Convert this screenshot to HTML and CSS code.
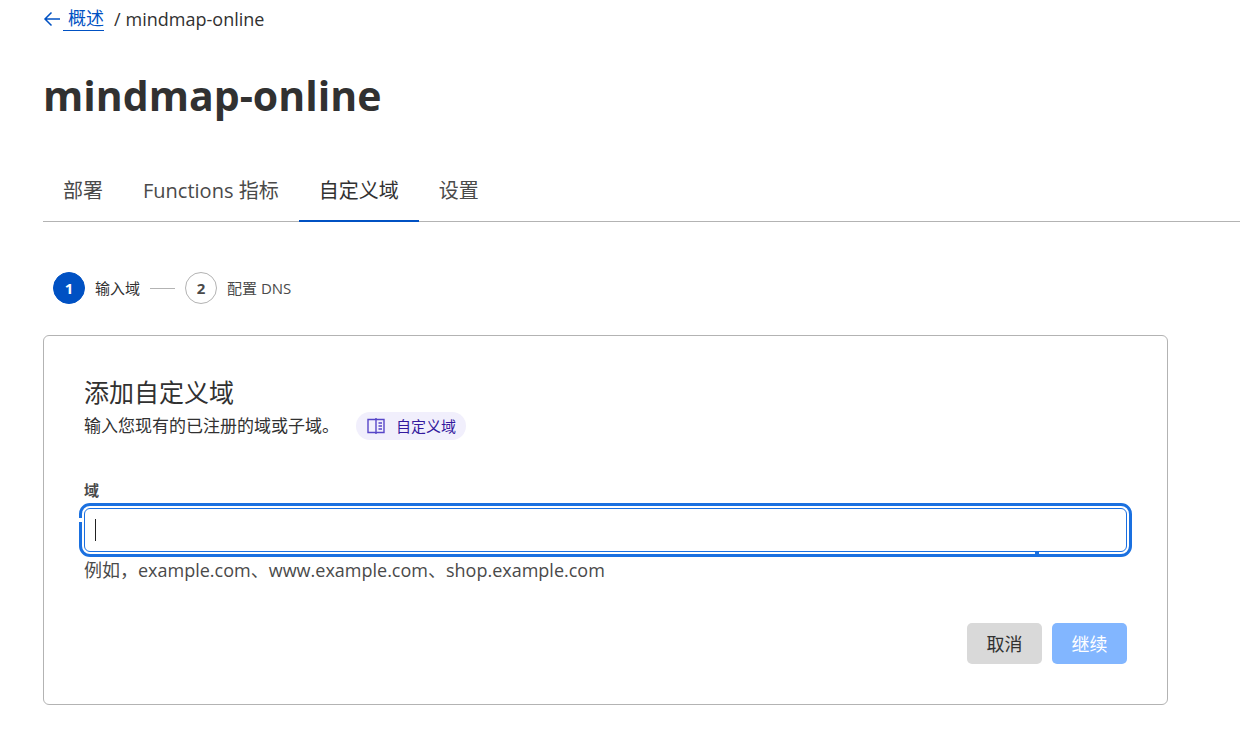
FILE: index.html
```html
<!DOCTYPE html>
<html lang="zh-CN">
<head>
<meta charset="utf-8">
<meta name="viewport" content="width=device-width, initial-scale=1">
<title>mindmap-online</title>
<link rel="stylesheet" href="styles.css">
</head>
<body>
<div class="page">
  <nav class="breadcrumb" aria-label="breadcrumb">
    <svg class="back-icon" viewBox="0 0 18 18" aria-hidden="true"><path d="M17 9H2M8.500 2.500L2 9l6.500 6.500"/></svg>
    <a class="back-link" href="#">概述</a>
    <span class="separator">/</span>
    <span>mindmap-online</span>
  </nav>
  <h1 class="title">mindmap-online</h1>
  <nav class="tabs">
    <a class="tab" href="#">部署</a>
    <a class="tab" href="#">Functions 指标</a>
    <a class="tab tab-active" href="#" aria-current="page">自定义域</a>
    <a class="tab" href="#">设置</a>
  </nav>
  <main class="content">
    <ol class="steps">
      <li class="step step-current"><span class="step-number">1</span><span>输入域</span></li>
      <li class="step"><span class="step-number">2</span><span>配置 DNS</span></li>
    </ol>
    <form class="card">
      <h2 class="card-title">添加自定义域</h2>
      <div class="intro">
        <p class="intro-text">输入您现有的已注册的域或子域。</p>
        <a class="doc-link" href="#">
          <svg class="book-icon" viewBox="0 0 20 20" aria-hidden="true"><path d="M10 3.5H2v13h8V18M10 3.500h8v13h-8zM10 2v16M12.500 7H16M12.500 10H16M12.500 13H16"/></svg>
          <span>自定义域</span>
        </a>
      </div>
      <label class="label" for="domain">域</label>
      <div class="field">
        <input class="input" id="domain" type="text" autocomplete="off" aria-describedby="domain-hint">
        <span class="caret"></span>
        <span class="ring-gap"></span>
        <span class="ring-mark"></span>
      </div>
      <p class="hint" id="domain-hint">例如，example.com、www.example.com、shop.example.com</p>
      <div class="actions">
        <button class="button button-cancel" type="button">取消</button>
        <button class="button button-continue" type="submit">继续</button>
      </div>
    </form>
  </main>
</div>
</body>
</html>
```
FILE: styles.css
```css
* { box-sizing: border-box; }

body {
  margin: 0;
  background: #fff;
  color: #313131;
  font: 18px/26px "Open Sans", "Noto Sans CJK SC", sans-serif;
}

h1, h2, p, ol { margin: 0; padding: 0; }

.page { padding: 6px 0 36px 43px; }

.breadcrumb {
  display: flex;
  align-items: center;
  line-height: 24px;
}
.back-icon { width: 18px; height: 18px; margin-right: 2px; }
.back-icon path { fill: none; stroke: #0051c3; stroke-width: 1.5; }
.back-link {
  padding-left: 5px;
  border-bottom: 1px solid #0051c3;
  color: #0051c3;
  text-decoration: none;
}
.separator { margin: 0 5px 0 10px; }

.title {
  margin-top: 34px;
  font-size: 41px;
  line-height: 60px;
  font-weight: 700;
}

.tabs {
  display: flex;
  margin-top: 36px;
  border-bottom: 1px solid #b3b3b3;
}
.tab {
  margin-bottom: -1px;
  padding: 15px 20px 14px;
  border-bottom: 2px solid transparent;
  color: #4a4a4a;
  font-size: 20px;
  line-height: 30px;
  text-decoration: none;
}
.tab-active { border-color: #0051c3; color: #313131; }

.content { padding-right: 72px; }

.steps {
  display: flex;
  align-items: center;
  margin: 50px 10px 31px;
  list-style: none;
  font-size: 15px;
}
.step { display: flex; align-items: center; gap: 10px; color: #4a4a4a; }
.step-current { color: #313131; }
.step-current::after { content: ""; width: 25px; height: 1px; margin-right: 10px; background: #b3b3b3; }
.step-number {
  display: grid;
  place-items: center;
  width: 32px;
  height: 32px;
  border: 1px solid #b3b3b3;
  border-radius: 50%;
  font-weight: 700;
}
.step-current .step-number { border-color: #0051c3; background: #0051c3; color: #fff; }

.card {
  padding: 40px;
  border: 1px solid #b3b3b3;
  border-radius: 6px;
}
.card-title { font-size: 25px; line-height: 32px; font-weight: 400; }
.intro { display: flex; align-items: center; gap: 17px; margin-top: 4px; }
.intro-text { font-size: 17px; line-height: 28px; }
.doc-link {
  display: flex;
  align-items: center;
  gap: 10px;
  height: 28px;
  padding: 0 10px;
  border-radius: 14px;
  background: #f1effc;
  color: #341a9e;
  font-size: 15px;
  text-decoration: none;
}
.book-icon { width: 20px; height: 20px; }
.book-icon path { fill: none; stroke: #5746c8; stroke-width: 1.4; }

.label { display: block; margin-top: 40px; color: #4a4a4a; font-size: 15px; line-height: 20px; font-weight: 700; }
.field { position: relative; margin-top: 8px; }
.input {
  display: block;
  width: 100%;
  height: 44px;
  padding: 0 10px;
  border: 1px solid #1a6fe0;
  border-radius: 6px;
  outline: 3px solid #1a70e0;
  outline-offset: 2px;
  font: inherit;
}
.caret { position: absolute; left: 11px; top: 11px; width: 1px; height: 22px; background: #222; }
.ring-gap { position: absolute; left: -5px; top: 10px; width: 3px; height: 4px; background: #fff; }
.ring-mark { position: absolute; right: 88px; bottom: -2px; width: 4px; height: 2px; background: #1a70e0; }
.hint { margin-top: 5px; color: #4a4a4a; }

.actions { display: flex; justify-content: flex-end; gap: 10px; margin-top: 40px; }
.button {
  min-width: 75px;
  height: 41px;
  padding: 0 19px;
  border: 0;
  border-radius: 5px;
  font: inherit;
}
.button-cancel { background: #d9d9d9; color: #313131; }
.button-continue { background: #82b6ff; color: #fff; }
```
